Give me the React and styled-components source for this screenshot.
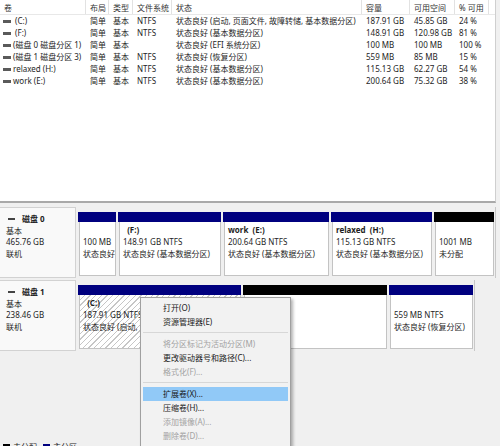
import React from "react";
import styled, { createGlobalStyle } from "styled-components";

const GlobalStyle = createGlobalStyle`
  html, body { margin: 0; padding: 0; }
  body {
    width: 500px;
    height: 446px;
    overflow: hidden;
    background: #f0f0f0;
    font-family: "Noto Sans", "Noto Sans CJK SC", sans-serif;
    font-size: 8px;
    color: #1e1e1e;
  }
`;

const COLS = "86px 23px 24px 39px 190px 48px 45px 34px";

const Window = styled.div`
  position: relative;
  width: 500px;
  height: 446px;
  overflow: hidden;
  display: flex;
  flex-direction: column;
`;

const ListPane = styled.div`
  width: 495px;
  height: 201px;
  flex: none;
  background: #fff;
  border-right: 1px solid #cfcfcf;
  border-bottom: 2px solid #a9a9a9;
`;

const HeaderRow = styled.div`
  display: grid;
  grid-template-columns: ${COLS};
  height: 15px;
  line-height: 15px;
  border-bottom: 1px solid #e8e8e8;
  box-sizing: border-box;
`;

const HeaderCell = styled.div`
  padding-left: 4px;
  border-right: 1px solid #e2e2e2;
  white-space: nowrap;
  overflow: hidden;
  color: #333;
`;

const Row = styled.div`
  display: grid;
  grid-template-columns: ${COLS};
  height: 12px;
  line-height: 12px;
`;

const Cell = styled.div`
  padding-left: ${(p) => (p.$first ? "3px" : "4px")};
  white-space: pre;
  overflow: hidden;
  display: flex;
  align-items: center;
`;

const VolIcon = styled.span`
  display: inline-block;
  width: 8px;
  height: 3px;
  background: #5a5a5a;
  margin-right: 2px;
  flex: none;
`;

const GraphPane = styled.div`
  flex: 1;
  display: flex;
  flex-direction: column;
  gap: 2px;
  padding-top: 4px;
`;

const DiskRow = styled.div`
  display: flex;
  height: 71px;
  flex: none;
`;

const LabelBox = styled.div`
  width: 76px;
  flex: none;
  box-sizing: border-box;
  background: #f9f9f9;
  border: 1px solid #d2d2d2;
  border-left: none;
  padding: 5px 0 0 6px;
  line-height: 11.5px;
`;

const DiskName = styled.div`
  display: flex;
  align-items: center;
  font-weight: bold;
  padding-left: 2px;
`;

const DiskIcon = styled.span`
  display: inline-block;
  width: 7px;
  height: 2px;
  background: #444;
  margin-right: 7px;
`;

const PartArea = styled.div`
  width: ${(p) => p.$w}px;
  flex: none;
  box-sizing: border-box;
  display: flex;
  gap: 2px;
  padding: 5px 1px 2px 2px;
  border-right: 1px solid #c8c8c8;
`;

const Partition = styled.div`
  width: ${(p) => p.$w}px;
  flex: none;
  display: flex;
  flex-direction: column;
`;

const Bar = styled.div`
  height: 10px;
  flex: none;
  background: ${(p) => (p.$kind === "free" ? "#000" : "#00007f")};
`;

const PartBox = styled.div`
  flex: 1;
  box-sizing: border-box;
  border: 1px solid #c3c3c3;
  border-top: none;
  margin-left: 1px;
  padding: 2px 0 0 3px;
  line-height: 12px;
  white-space: pre;
  overflow: hidden;
  background: ${(p) =>
    p.$selected
      ? "repeating-linear-gradient(135deg, #fff 0 3px, #c6c6c6 3px 4px)"
      : "#fff"};
`;

const PartTitle = styled.div`
  font-weight: bold;
  height: 12px;
`;

const Menu = styled.div`
  position: absolute;
  left: 140px;
  top: 297px;
  width: 151px;
  height: 160px;
  box-sizing: border-box;
  background: #f2f2f2;
  border: 1px solid #a0a0a0;
  box-shadow: 2px 2px 3px rgba(0, 0, 0, 0.3);
  padding: 3px 2px;
  z-index: 5;
`;

const MenuItem = styled.div`
  height: 14px;
  line-height: 14px;
  padding-left: 20px;
  white-space: nowrap;
  color: ${(p) => (p.$disabled ? "#a2a2a2" : "#1a1a1a")};
  background: ${(p) => (p.$active ? "#91c9f7" : "transparent")};
`;

const MenuSep = styled.div`
  height: 1px;
  background: #d7d7d7;
  margin: 3px 0 4px;
`;

const Legend = styled.div`
  display: flex;
  align-items: center;
  gap: 3px;
  height: 12px;
  line-height: 12px;
  margin-top: 88px;
  padding-left: 3px;
`;

const Swatch = styled.span`
  display: inline-block;
  width: 7px;
  height: 7px;
  background: ${(p) => p.$color};
  margin-left: ${(p) => (p.$gap ? "3px" : "0")};
`;

const headers = ["卷", "布局", "类型", "文件系统", "状态", "容量", "可用空间", "% 可用"];

const volumes = [
  [" (C:)", "NTFS", "状态良好 (启动, 页面文件, 故障转储, 基本数据分区)", "187.91 GB", "45.85 GB", "24 %"],
  [" (F:)", "NTFS", "状态良好 (基本数据分区)", "148.91 GB", "120.98 GB", "81 %"],
  ["(磁盘 0 磁盘分区 1)", "", "状态良好 (EFI 系统分区)", "100 MB", "100 MB", "100 %"],
  ["(磁盘 1 磁盘分区 3)", "NTFS", "状态良好 (恢复分区)", "559 MB", "85 MB", "15 %"],
  ["relaxed (H:)", "NTFS", "状态良好 (基本数据分区)", "115.13 GB", "62.27 GB", "54 %"],
  ["work (E:)", "NTFS", "状态良好 (基本数据分区)", "200.64 GB", "75.32 GB", "38 %"],
];

const disks = [
  {
    name: "磁盘 0",
    size: "465.76 GB",
    area: 420,
    parts: [
      { w: 38, title: "", size: "100 MB", status: "状态良好" },
      { w: 103, title: "  (F:)", size: "148.91 GB NTFS", status: "状态良好 (基本数据分区)" },
      { w: 106, title: "work  (E:)", size: "200.64 GB NTFS", status: "状态良好 (基本数据分区)" },
      { w: 101, title: "relaxed  (H:)", size: "115.13 GB NTFS", status: "状态良好 (基本数据分区)" },
      { w: 60, kind: "free", title: "", size: "1001 MB", status: "未分配" },
    ],
  },
  {
    name: "磁盘 1",
    size: "238.46 GB",
    area: 399,
    parts: [
      { w: 163, selected: true, title: "  (C:)", size: "187.91 GB NTFS", status: "状态良好 (启动, 页面文件, 故障转储, 基本数据分区)" },
      { w: 144, kind: "free", title: "", size: "", status: "" },
      { w: 84, title: "", size: "559 MB NTFS", status: "状态良好 (恢复分区)" },
    ],
  },
];

const menu = [
  { t: "打开(O)" },
  { t: "资源管理器(E)" },
  { sep: true },
  { t: "将分区标记为活动分区(M)", off: true },
  { t: "更改驱动器号和路径(C)..." },
  { t: "格式化(F)...", off: true },
  { sep: true },
  { t: "扩展卷(X)...", active: true },
  { t: "压缩卷(H)..." },
  { t: "添加镜像(A)...", off: true },
  { t: "删除卷(D)...", off: true },
  { sep: true },
];

export default function App() {
  return (
    <Window>
      <GlobalStyle />
      <ListPane>
        <HeaderRow>
          {headers.map((h) => (
            <HeaderCell key={h}>{h}</HeaderCell>
          ))}
        </HeaderRow>
        {volumes.map(([name, fs, status, cap, free, pct]) => (
          <Row key={name}>
            <Cell $first>
              <VolIcon />
              {name}
            </Cell>
            <Cell>简单</Cell>
            <Cell>基本</Cell>
            <Cell>{fs}</Cell>
            <Cell>{status}</Cell>
            <Cell>{cap}</Cell>
            <Cell>{free}</Cell>
            <Cell>{pct}</Cell>
          </Row>
        ))}
      </ListPane>

      <GraphPane>
        {disks.map((d) => (
          <DiskRow key={d.name}>
            <LabelBox>
              <DiskName>
                <DiskIcon />
                {d.name}
              </DiskName>
              <div>基本</div>
              <div>{d.size}</div>
              <div>联机</div>
            </LabelBox>
            <PartArea $w={d.area}>
              {d.parts.map((p, i) => (
                <Partition key={i} $w={p.w}>
                  <Bar $kind={p.kind} />
                  <PartBox $selected={p.selected}>
                    <PartTitle>{p.title}</PartTitle>
                    <div>{p.size}</div>
                    <div>{p.status}</div>
                  </PartBox>
                </Partition>
              ))}
            </PartArea>
          </DiskRow>
        ))}
        <Legend>
          <Swatch $color="#000" />
          未分配
          <Swatch $color="#00007f" $gap />
          主分区
        </Legend>
      </GraphPane>

      <Menu>
        {menu.map((m, i) =>
          m.sep ? (
            <MenuSep key={i} />
          ) : (
            <MenuItem key={i} $disabled={m.off} $active={m.active}>
              {m.t}
            </MenuItem>
          )
        )}
      </Menu>
    </Window>
  );
}
